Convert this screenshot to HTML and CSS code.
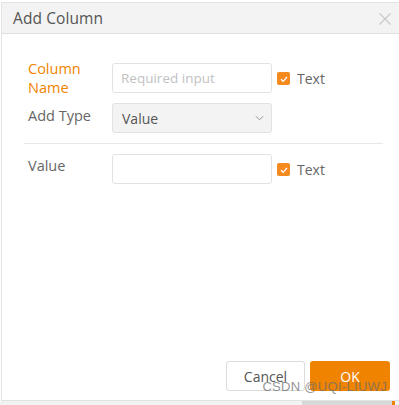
FILE: index.html
```html
<!DOCTYPE html>
<html lang="en">
<head>
  <meta charset="UTF-8" />
  <title>Add Column</title>
  <link rel="stylesheet" href="styles.css">
</head>
<body>

  <div class="dialog">
    <div class="dialog-head">
      <span class="dialog-title">Add Column</span>
      <svg class="dialog-close" viewBox="0 0 12 12" width="12" height="12"><path d="M0.5 0.5 L11.5 11.5 M11.5 0.5 L0.5 11.5" stroke="#c8c8c8" stroke-width="1.1"/></svg>
    </div>

    <div class="dialog-body">
      <div class="row row-name">
        <label class="label required">Column<br>Name</label>
        <input class="field" type="text" placeholder="Required input" />
        <span class="check"><span class="box"><svg viewBox="0 0 14 14" width="14" height="14"><path d="M4 7.2 L6.2 9.3 L10 5" fill="none" stroke="#fff" stroke-width="1.2"/></svg></span>Text</span>
      </div>

      <div class="row row-type">
        <label class="label">Add Type</label>
        <div class="field select">
          <span>Value</span>
          <svg viewBox="0 0 10 6" width="9" height="6"><path d="M1 1 L5 5 L9 1" fill="none" stroke="#888" stroke-width="1"/></svg>
        </div>
      </div>

      <div class="divider"></div>

      <div class="row row-value">
        <label class="label">Value</label>
        <input class="field" type="text" />
        <span class="check"><span class="box"><svg viewBox="0 0 14 14" width="14" height="14"><path d="M4 7.2 L6.2 9.3 L10 5" fill="none" stroke="#fff" stroke-width="1.2"/></svg></span>Text</span>
      </div>
    </div>

    <div class="dialog-foot">
      <button class="btn btn-cancel">Cancel</button>
      <button class="btn btn-ok">OK</button>
      <span class="watermark">CSDN @UQI-LIUWJ</span>
    </div>
  </div>

  <div class="under"><span class="under-bar"></span></div>

</body>
</html>
```

FILE: styles.css
```css
body {
  margin: 0;
  padding: 2px 0 0 1px;
  font-family: "Open Sans", "Noto Sans", sans-serif;
  background: #fff;
  width: 399px;
  height: 405px;
  overflow: hidden;
  box-sizing: border-box;
}
.dialog {
  width: 400px;
  height: 399px;
  border: 1px solid #e3e3e3;
  border-right: none;
  box-sizing: border-box;
  display: flex;
  flex-direction: column;
  background: #fff;
  position: relative;
}
.dialog-head {
  height: 30px;
  background: #f3f3f3;
  border-bottom: 1px solid #e0e0e0;
  display: flex;
  align-items: center;
  justify-content: space-between;
  padding: 0 10px 0 11px;
  flex-shrink: 0;
}
.dialog-title {
  font-size: 15.5px;
  color: #555;
  letter-spacing: 0.1px;
}
.dialog-close {
  margin-top: 1px;
}
.dialog-body {
  flex: 1;
  padding: 25px 18px 0 21px;
}
.row {
  display: flex;
  align-items: flex-start;
}
.label {
  width: 89px;
  box-sizing: border-box;
  font-size: 14.5px;
  line-height: 19px;
  color: #666;
  padding-left: 5px;
  flex-shrink: 0;
}
.label.required {
  color: #f08300;
}
.field {
  width: 160px;
  height: 30px;
  box-sizing: border-box;
  border: 1px solid #e2e2e2;
  border-radius: 3px;
  padding: 0 8px;
  font-family: inherit;
  font-size: 13.5px;
  color: #555;
  margin: 0;
  outline: none;
  flex-shrink: 0;
}
.field::placeholder {
  color: #c2c2c2;
}
.check {
  display: flex;
  align-items: center;
  font-size: 14px;
  line-height: 19px;
  color: #666;
  margin-left: 5px;
}
.box {
  width: 13px;
  height: 13px;
  background: #f58a1f;
  border-radius: 2px;
  display: flex;
  align-items: center;
  justify-content: center;
  margin-right: 7px;
  overflow: hidden;
}
.box svg {
  flex-shrink: 0;
}
.row-name .field {
  margin-top: 4px;
}
.row-name .check {
  margin-top: 10px;
}
.row-type {
  margin-top: 6px;
}
.row-type .label {
  padding-top: 3px;
}
.select {
  background: #f3f3f3;
  display: flex;
  align-items: center;
  justify-content: space-between;
  font-size: 14px;
  padding: 0 7px 0 9px;
}
.divider {
  height: 1px;
  background: #e8e8e8;
  margin: 10px 0 0 1px;
}
.row-value {
  margin-top: 10px;
}
.row-value .label {
  margin-top: 2px;
}
.row-value .check {
  margin-top: 6px;
}
.dialog-foot {
  display: flex;
  justify-content: flex-end;
  gap: 5px;
  padding: 0 11px 9px 0;
  position: relative;
}
.btn {
  height: 30px;
  border-radius: 3px;
  font-family: inherit;
  font-size: 14px;
  cursor: pointer;
}
.btn-cancel {
  background: #fff;
  border: 1px solid #dcdcdc;
  color: #555;
  width: 79px;
}
.btn-ok {
  background: #f08300;
  border: none;
  color: #fff;
  width: 80px;
}
.watermark {
  position: absolute;
  right: 14px;
  bottom: 6px;
  font-family: "Liberation Sans", Arial, sans-serif;
  font-size: 13px;
  color: rgba(110, 110, 110, 0.75);
  letter-spacing: 0.3px;
}
.under {
  height: 4px;
  background: #f2f2f2;
  margin-left: -1px;
  display: flex;
  justify-content: flex-end;
}
.under-bar {
  width: 90px;
  background: #d8d8d8;
  margin-right: 4px;
  border-right: 3px solid #f08300;
}
```
